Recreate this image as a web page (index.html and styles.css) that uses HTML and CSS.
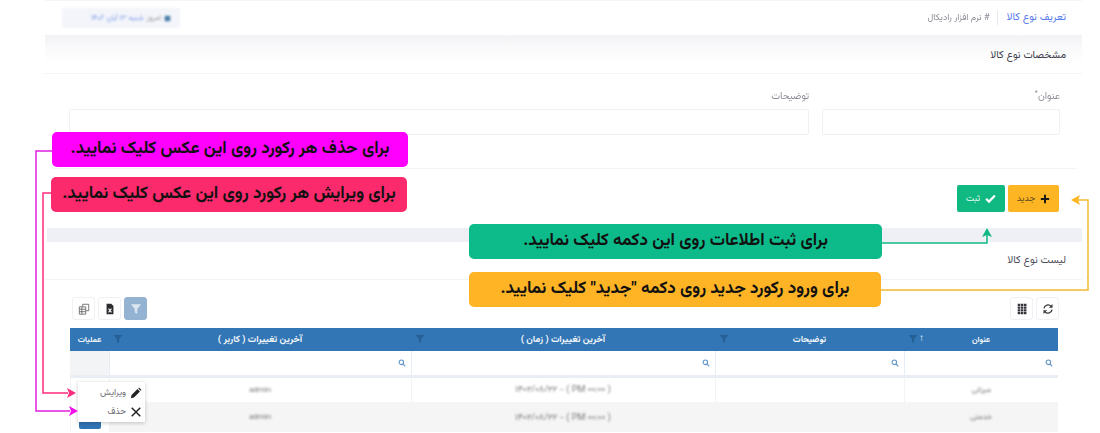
FILE: index.html
```html
<!DOCTYPE html>
<html lang="fa" dir="rtl">
<head>
<meta charset="utf-8">
<title>تعریف نوع کالا</title>
<link rel="stylesheet" href="styles.css">
</head>
<body>
<div class="page">
  <header class="topbar">
    <h1 class="page-title">تعریف نوع کالا</h1>
    <span class="crumb"># نرم افزار رادیکال</span>
    <div class="date-chip">
      <svg class="date-icon" viewBox="0 0 10 10"><rect x="1" y="1" width="8" height="8" rx="1"/></svg>
      <span class="date-gray">امروز</span> <span>شنبه ۱۳ آبان ۱۴۰۲</span>
    </div>
  </header>

  <div class="section-head">مشخصات نوع کالا</div>

  <form class="form">
    <label class="field field-title">
      <span class="field-label">عنوان<sup>*</sup></span>
      <span class="input"></span>
    </label>
    <label class="field field-desc">
      <span class="field-label">توضیحات</span>
      <span class="input"></span>
    </label>
  </form>

  <div class="actions">
    <button type="button" class="btn btn-new">
      <svg class="btn-icon" viewBox="0 0 12 12"><path d="M6 1v10M1 6h10"/></svg>
      <span>جدید</span>
    </button>
    <button type="button" class="btn btn-save">
      <svg class="btn-icon" viewBox="0 0 12 12"><path d="M1.2 6.2l3.2 3.2 6.4-6.6"/></svg>
      <span>ثبت</span>
    </button>
  </div>

  <div class="band"></div>
  <div class="list-head">لیست نوع کالا</div>

  <div class="toolbar">
    <div class="tool-group">
      <button type="button" class="tool">
        <svg viewBox="0 0 14 14" class="tool-svg"><path d="M2.300 6.300A4.800 4.800 0 0 1 10.600 3.700"/><path d="M11.700 7.700A4.800 4.800 0 0 1 3.400 10.300"/><path class="tool-fill" d="M12.300 1.300v4.300H8zM1.700 12.700V8.400H6z"/></svg>
      </button>
      <button type="button" class="tool">
        <svg viewBox="0 0 14 14" class="tool-dots"><path d="M2 1h3v2.500H2zM5.700 1h2.800v2.500H5.700zM9.200 1h3v2.500h-3zM2 4.200h3v2.500H2zM5.700 4.200h2.800v2.500H5.700zM9.200 4.200h3v2.500h-3zM2 7.400h3v2.500H2zM5.700 7.400h2.800v2.500H5.700zM9.200 7.400h3v2.500h-3zM2 10.600h3v2.500H2zM5.700 10.600h2.800v2.500H5.700zM9.200 10.600h3v2.500h-3z"/></svg>
      </button>
    </div>
    <div class="tool-group">
      <button type="button" class="tool tool-filter">
        <svg viewBox="0 0 14 14" class="funnel-svg"><path d="M1 1.500h12L8.500 7v5.500l-3-1.500V7z"/></svg>
      </button>
      <button type="button" class="tool">
        <svg viewBox="0 0 14 14" class="tool-xls"><path d="M3 1h5.500L11 3.500V13H3z"/><path class="xls-mark" d="M5.300 6.500l3.400 4.500M8.700 6.500l-3.400 4.500"/></svg>
      </button>
      <button type="button" class="tool">
        <svg viewBox="0 0 14 14" class="tool-line"><path d="M5.500 4V1.500h7V9H9.500M1.500 4.500H9V13H1.500zM1.500 7.300H9M1.500 10.100H9M4.500 4.500V13"/></svg>
      </button>
    </div>
  </div>

  <table class="grid">
    <colgroup>
      <col class="c-title"><col class="c-desc"><col class="c-time"><col class="c-user"><col class="c-ops">
    </colgroup>
    <thead>
      <tr class="head-row">
        <th><span>عنوان</span><span class="sort">↑</span><svg class="h-funnel" viewBox="0 0 14 14"><path d="M1 1.500h12L8.500 7v5.500l-3-1.500V7z"/></svg></th>
        <th><span class="h-mid">توضیحات</span><svg class="h-funnel" viewBox="0 0 14 14"><path d="M1 1.500h12L8.500 7v5.500l-3-1.500V7z"/></svg></th>
        <th><span class="h-long">آخرین تغییرات ( زمان )</span><svg class="h-funnel" viewBox="0 0 14 14"><path d="M1 1.500h12L8.500 7v5.500l-3-1.500V7z"/></svg></th>
        <th><span class="h-long">آخرین تغییرات ( کاربر )</span><svg class="h-funnel" viewBox="0 0 14 14"><path d="M1 1.500h12L8.500 7v5.500l-3-1.500V7z"/></svg></th>
        <th>عملیات</th>
      </tr>
      <tr class="filter-row">
        <td><svg class="search" viewBox="0 0 12 12"><circle cx="5" cy="5" r="3.400"/><path d="M7.500 7.500L11 11"/></svg></td>
        <td><svg class="search" viewBox="0 0 12 12"><circle cx="5" cy="5" r="3.400"/><path d="M7.500 7.500L11 11"/></svg></td>
        <td><svg class="search" viewBox="0 0 12 12"><circle cx="5" cy="5" r="3.400"/><path d="M7.500 7.500L11 11"/></svg></td>
        <td><svg class="search" viewBox="0 0 12 12"><circle cx="5" cy="5" r="3.400"/><path d="M7.500 7.500L11 11"/></svg></td>
        <td class="filter-ops"></td>
      </tr>
    </thead>
    <tbody>
      <tr class="row">
        <td><span class="fuzzy">میزانی</span></td><td></td>
        <td><span class="fuzzy fuzzy-date">( PM ۰۰:۰۰ ) - ۱۴۰۲/۰۸/۲۲</span></td>
        <td><span class="fuzzy">admin</span></td><td></td>
      </tr>
      <tr class="row row-alt">
        <td><span class="fuzzy">خدمتی</span></td><td></td>
        <td><span class="fuzzy fuzzy-date">( PM ۰۰:۰۰ ) - ۱۴۰۲/۰۸/۲۲</span></td>
        <td><span class="fuzzy">admin</span></td>
        <td class="ops-cell"><span class="ops-btn"></span></td>
      </tr>
    </tbody>
  </table>

  <div class="popup">
    <div class="popup-item">
      <svg class="pop-pencil" viewBox="0 0 14 14"><path d="M1 13l.8-3.600 7-7 2.800 2.800-7 7zM9.600 1.600l1-1 2.800 2.800-1 1z"/></svg>
      <span>ویرایش</span>
    </div>
    <div class="popup-item">
      <svg class="pop-x" viewBox="0 0 14 14"><path d="M2 2l10 10M12 2L2 12"/></svg>
      <span>حذف</span>
    </div>
  </div>

  <svg class="wires" viewBox="0 0 1100 433">
    <path class="w-mag" d="M52 151H36V411H70"/><path class="tip-mag" d="M78 411l-9-5 2 5-2 5z"/>
    <path class="w-pink" d="M51 193H43V393H68"/><path class="tip-pink" d="M76 393l-9-5 2 5-2 5z"/>
    <path class="w-green" d="M882 243H987V234"/><path class="tip-green" d="M987 228l-5 9 5-2 5 2z"/>
    <path class="w-amber" d="M881 290H1088V200H1078"/><path class="tip-amber" d="M1071 200l9-5-2 5 2 5z"/>
  </svg>

  <div class="note note-mag">برای حذف هر رکورد روی این عکس کلیک نمایید.</div>
  <div class="note note-pink">برای ویرایش هر رکورد روی این عکس کلیک نمایید.</div>
  <div class="note note-green">برای ثبت اطلاعات روی این دکمه کلیک نمایید.</div>
  <div class="note note-amber">برای ورود رکورد جدید روی دکمه "جدید" کلیک نمایید.</div>
</div>
</body>
</html>
```
FILE: styles.css
```css
* { box-sizing: border-box; }
html, body { margin: 0; padding: 0; background: #fff; }
.page {
  position: relative;
  width: 1100px;
  height: 433px;
  overflow: hidden;
  padding: 0 18px 0 45px;
  font-family: "Vazirmatn", "Noto Sans Arabic", "DejaVu Sans", sans-serif;
  color: #48465b;
  background: #fff;
}
.topbar {
  display: flex;
  align-items: center;
  height: 35px;
  padding-right: 16px;
  border-top: 1px solid #f5f5f7;
}
.page-title {
  margin: 0;
  font-size: 10.500px;
  font-weight: 400;
  color: #5578eb;
  padding-left: 9px;
  border-left: 1px solid #e7e8ef;
  line-height: 14px;
}
.crumb { font-size: 9px; color: #8a8b96; margin-right: 7px; filter: blur(.3px); }
.date-chip {
  display: flex;
  align-items: center;
  gap: 3px;
  height: 20px;
  width: 118px;
  margin-right: auto;
  margin-left: 17px;
  padding-right: 9px;
  background: #f3f5fa;
  color: #7d9ae8;
  font-size: 7.500px;
  filter: blur(.8px);
}
.date-icon { width: 7px; height: 7px; fill: #4c7fa8; }
.date-gray { color: #9a9aa5; }
.section-head {
  height: 39px;
  padding: 14px 16px 0 0;
  font-size: 10.500px;
  line-height: 14px;
  color: #3d3d4a;
  background: linear-gradient(#f3f3f5, #fafafb 35%, #fff 75%, #fff);
  border-bottom: 1px solid #f3f3f6;
}
.form {
  display: grid;
  grid-template-columns: 238px 740px;
  column-gap: 13px;
  height: 95px;
  padding: 17px 17px 0 0;
  margin-left: 6px;
  margin-right: 5px;
  border-bottom: 1px solid #f2f3f6;
}
.field { display: flex; flex-direction: column; }
.field-label { height: 18px; font-size: 10px; line-height: 12px; color: #8f909b; filter: blur(.2px); }
.field-label sup { font-size: 7px; line-height: 0; }
.input { display: block; height: 26px; border: 1px solid #f0f1f5; border-radius: 2px; background: #fff; }
.actions {
  display: flex;
  gap: 3px;
  height: 59px;
  padding: 16px 23px 0 0;
}
.btn {
  display: flex;
  align-items: center;
  justify-content: center;
  gap: 5px;
  height: 27px;
  border: 0;
  border-radius: 2px;
  padding: 0;
  font-family: inherit;
  font-size: 9px;
}
.btn-new { width: 51px; background: #fdb523; color: #5d4a20; }
.btn-save { width: 48px; background: #10b981; color: #e9fbf4; }
.btn-icon { width: 10px; height: 10px; fill: none; stroke-width: 2.400; }
.btn-new .btn-icon { stroke: #1c1a14; }
.btn-save .btn-icon { stroke: #fff; width: 11px; height: 11px; }
.band { height: 14px; background: #eff0f5; margin-left: 2px; }
.list-head {
  height: 38px;
  padding: 12px 16px 0 0;
  font-size: 10.500px;
  line-height: 14px;
  color: #4d4d5a;
  border-bottom: 1px solid #f3f4f7;
}
.toolbar {
  display: flex;
  justify-content: space-between;
  height: 48px;
  padding: 17px 23px 0 27px;
}
.tool-group { display: flex; gap: 3px; }
.tool {
  display: flex;
  align-items: center;
  justify-content: center;
  width: 23px;
  height: 23px;
  padding: 0;
  background: #fff;
  border: 1px solid #f0f1f5;
  border-radius: 3px;
}
.tool svg { width: 12px; height: 12px; }
.tool-svg { fill: none; stroke: #3a3a3a; stroke-width: 1.500; filter: blur(.2px); }
.tool-fill { fill: #3a3a3a; stroke: none; }
.tool-dots { fill: #33333a; }
.tool-xls { fill: #2c2c30; }
.xls-mark { fill: none; stroke: #fff; stroke-width: 1.200; }
.tool-line { fill: none; stroke: #666; stroke-width: 1; }
.tool-filter { background: #94b3d2; border-color: #94b3d2; }
.funnel-svg { fill: #dbe6f0; }
.grid {
  width: 988px;
  margin-right: 24px;
  border-collapse: collapse;
  table-layout: fixed;
  font-size: 8px;
}
.c-title { width: 154px; }
.c-desc { width: 189px; }
.c-time { width: 304px; }
.c-user { width: 302px; }
.c-ops { width: 39px; }
.head-row th {
  position: relative;
  height: 23px;
  padding: 0;
  background: #3276b5;
  color: #f2f6fa;
  font-weight: 700;
  font-size: 8px;
  text-align: center;
}
.h-mid { font-size: 8.700px; }
.h-long { font-size: 9.300px; }
.sort { position: absolute; left: 15px; top: 4px; font-size: 10px; font-weight: 400; font-family: "Liberation Sans", sans-serif; }
.h-funnel { position: absolute; left: 4px; top: 6px; width: 10px; height: 10px; fill: #255f96; }
.filter-row td {
  height: 25px;
  padding: 0 5px 0 0;
  border-left: 1px solid #e6edf5;
  border-bottom: 3px solid #e9eef4;
  line-height: 0;
  vertical-align: middle;
}
.filter-row .filter-ops { background: #f3f4f6; border-left: 0; }
.search { width: 8px; height: 8px; fill: none; stroke: #5f94c4; stroke-width: 1.600; }
.row td {
  height: 26px;
  padding: 0;
  text-align: center;
  border-left: 1px solid #f2f4f8;
  vertical-align: middle;
}
.row-alt td { height: 30px; background: #f5f5f6; vertical-align: top; padding-top: 9px; }
.fuzzy { font-size: 8px; color: #777; filter: blur(1.100px); display: inline-block; }
.fuzzy-date { font-size: 9px; }
.ops-cell { text-align: left; background: #fff !important; }
.ops-btn { display: block; width: 22px; height: 18px; margin: 0 8px; background: #2f74b5; border-radius: 2px; }
.popup {
  position: absolute;
  left: 78px;
  top: 382px;
  width: 67px;
  height: 40px;
  padding: 1px 3px 0 0;
  background: #fff;
  box-shadow: 0 1px 4px rgba(0,0,0,.22);
}
.popup-item {
  display: flex;
  align-items: center;
  gap: 4px;
  height: 19px;
  font-size: 9px;
  color: #6a6a72;
}
.pop-pencil { width: 12px; height: 12px; fill: #222; }
.pop-x { width: 12px; height: 12px; fill: none; stroke: #222; stroke-width: 1.700; }
.wires { position: absolute; left: 0; top: 0; width: 1100px; height: 433px; }
.wires path[class^="w-"] { fill: none; stroke-width: 1.500; }
.w-mag { stroke: #e01fe0; }
.w-pink { stroke: #ff2d7d; }
.w-green { stroke: #10b981; }
.w-amber { stroke: #f0ba2c; }
.tip-mag { fill: #f010e8; }
.tip-pink { fill: #ff2d7d; }
.tip-green { fill: #10b981; }
.tip-amber { fill: #fdb523; }
.note {
  position: absolute;
  display: flex;
  align-items: center;
  justify-content: center;
  height: 35px;
  padding-bottom: 2px;
  border-radius: 5px;
  color: #111;
  font-size: 17px;
  font-weight: 700;
  white-space: nowrap;
}
.note-mag { left: 52px; top: 132px; width: 356px; background: #ff00ff; }
.note-pink { left: 51px; top: 177px; width: 356px; background: #fb2a6c; }
.note-green { left: 469px; top: 224px; width: 413px; background: #0dbb8a; }
.note-amber { left: 469px; top: 272px; width: 412px; background: #feb424; }
```
